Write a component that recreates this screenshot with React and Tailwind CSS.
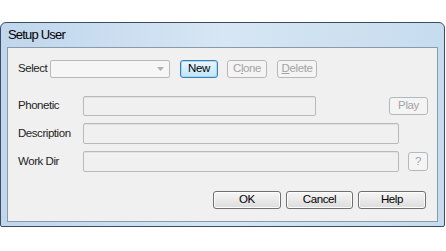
import React from "react";

const font = { fontFamily: '"Liberation Sans", Arial, sans-serif' };

// ── Push button, Vista style ────────────────────────────────────────────────
function Btn({ children, w, state = "normal", className = "" }) {
  const look =
    state === "focus"
      ? "border-[#3c7fb1] bg-gradient-to-b from-[#eaf6fd] to-[#bee6fd] text-black shadow-[inset_0_0_0_1px_#a8d8f2]"
      : state === "disabled"
      ? "border-[#b5b8bb] bg-[#f4f4f4] text-[#a3a3a3]"
      : "border-[#707070] bg-gradient-to-b from-[#f6f6f6] to-[#dcdcdc] text-black shadow-[inset_0_0_0_1px_#fcfcfc]";
  return (
    <div
      className={`flex h-[18px] shrink-0 items-center justify-center rounded-[3px] border text-[11.5px] tracking-[-0.4px] ${look} ${className}`}
      style={{ width: w }}
    >
      {children}
    </div>
  );
}

function Field({ w, h = 21 }) {
  return (
    <div
      className="shrink-0 rounded-[2px] border border-[#b9b9b9] bg-[#f0f0f0] shadow-[inset_0_1px_0_#e2e2e2]"
      style={{ width: w, height: h }}
    />
  );
}

export default function App() {
  return (
    <div className="h-[251px] w-[446px] overflow-hidden bg-white" style={font}>
      <div className="mt-[22px] flex h-[205px] w-[445px] flex-col rounded-t-[6px] rounded-b-[2px] border border-[#3b4d63] bg-gradient-to-r from-[#bfd6ec] via-[#d6e6f4] to-[#c6dcee]">
        {/* Title bar */}
        <div className="flex h-[24px] shrink-0 items-center pl-[7px] text-[13px] tracking-[-0.8px] text-black">
          Setup User
        </div>

        {/* Client area */}
        <div className="mx-[6px] flex h-[175px] flex-col border border-[#8a99ab] bg-[#f0f0f0] pt-[12px] text-[11.5px] tracking-[-0.45px] text-[#1e1e1e]">
          <div className="flex h-[18px] items-center pl-[10px]">
            <span className="w-[32px] shrink-0">Select</span>
            <div className="flex h-[18px] w-[120px] shrink-0 items-center justify-end rounded-[2px] border border-[#b9b9b9] bg-[#f6f6f6] pr-[5px]">
              <svg width="7" height="4" viewBox="0 0 7 4">
                <path d="M0 0h7L3.5 4z" fill="#b0b0b0" />
              </svg>
            </div>
            <Btn w={38} state="focus" className="ml-[10px]">
              New
            </Btn>
            <Btn w={40} state="disabled" className="ml-[9px]">
              <span>
                C<span className="underline">l</span>one
              </span>
            </Btn>
            <Btn w={40} state="disabled" className="ml-[10px]">
              <span>
                <span className="underline">D</span>elete
              </span>
            </Btn>
          </div>

          <div className="mt-[18px] flex h-[20px] items-center pl-[10px]">
            <span className="w-[65px] shrink-0">Phonetic</span>
            <Field w={233} h={20} />
            <Btn w={39} state="disabled" className="ml-[73px]">
              Play
            </Btn>
          </div>

          <div className="mt-[7px] flex h-[21px] items-center pl-[10px]">
            <span className="w-[65px] shrink-0">Description</span>
            <Field w={316} />
          </div>

          <div className="mt-[7px] flex h-[21px] items-center pl-[10px]">
            <span className="w-[65px] shrink-0">Work Dir</span>
            <Field w={316} />
            <Btn w={20} state="disabled" className="ml-[9px] !h-[19px]">
              ?
            </Btn>
          </div>

          <div className="mt-[19px] flex justify-end gap-[5px] pr-[11px]">
            <Btn w={68}>OK</Btn>
            <Btn w={67}>Cancel</Btn>
            <Btn w={68}>Help</Btn>
          </div>
        </div>
      </div>
    </div>
  );
}
